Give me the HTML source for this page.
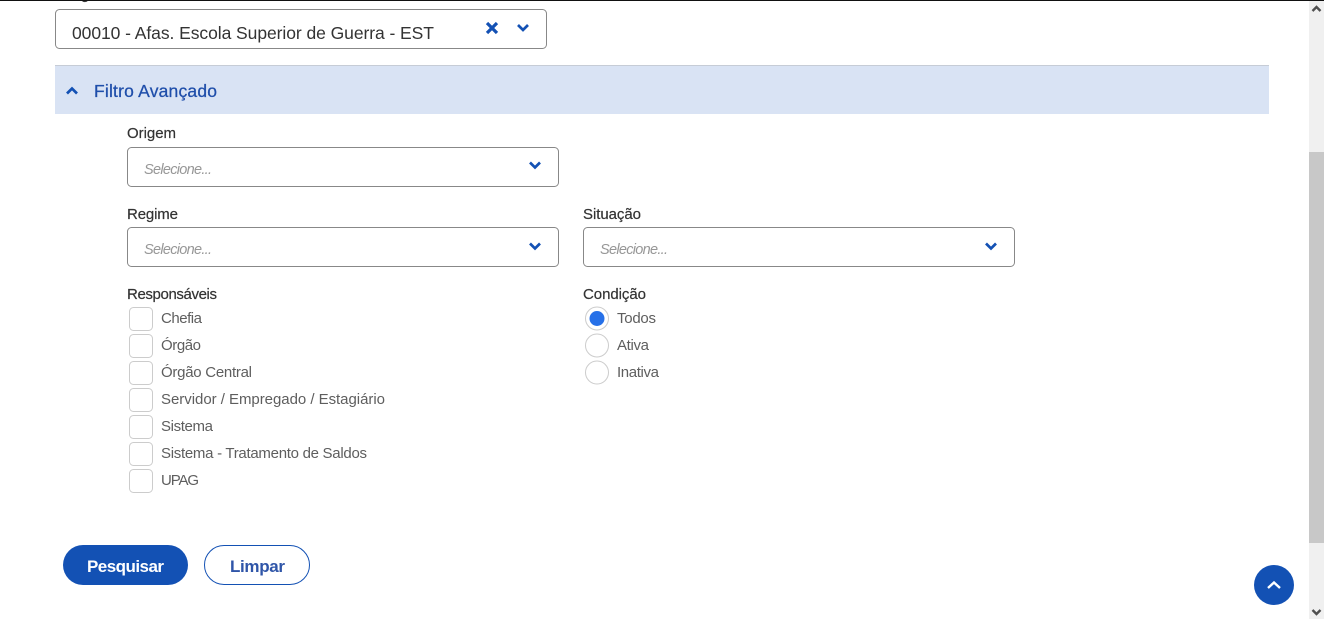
<!DOCTYPE html>
<html lang="pt-BR">
<head>
<meta charset="utf-8">
<title>Filtro Avançado</title>
<style>
html,body{margin:0;padding:0;width:1324px;height:619px;overflow:hidden;background:#fff}
svg{display:block}
text{font-family:"Liberation Sans",sans-serif}
.l{font-size:15px;fill:#333;stroke:#333;stroke-width:.2px}
.o{font-size:15px;fill:#5e5e5e}
.p{font-size:14.5px;fill:#979797;font-style:italic}
.box{fill:#fff;stroke:#888;stroke-width:1}
.ck{fill:#fff;stroke:#ccc;stroke-width:1}
.ch{fill:none;stroke:#1351b4;stroke-width:2.7;stroke-linecap:butt;stroke-linejoin:miter}
</style>
</head>
<body>
<svg width="1324" height="619" viewBox="0 0 1324 619" xmlns="http://www.w3.org/2000/svg">
<rect width="1324" height="619" fill="#fff"/>
<text class="l" x="66" y="-1" textLength="38" lengthAdjust="spacing">Órgão</text>
<rect x="0" y="0" width="1324" height="1" fill="#111"/>

<rect class="box" x="55.500" y="9.500" width="491" height="39" rx="4"/>
<text x="72" y="39" font-size="17.500" fill="#333" textLength="362" lengthAdjust="spacing">00010 - Afas. Escola Superior de Guerra - EST</text>
<path d="M487 23l10 10M497 23l-10 10" fill="none" stroke="#1351b4" stroke-width="3.200"/>
<path class="ch" d="M518 25l5 5 5-5"/>

<rect x="55" y="65" width="1214" height="49" fill="#d9e3f4"/>
<rect x="55" y="65" width="1214" height="1" fill="#c6ccd6"/>
<path class="ch" d="M67 93.500l5-5 5 5"/>
<text x="94" y="97" font-size="17.500" fill="#1f4eaa" stroke="#1f4eaa" stroke-width=".25" textLength="123" lengthAdjust="spacing">Filtro Avançado</text>

<text class="l" x="127" y="138" textLength="49" lengthAdjust="spacing">Origem</text>
<rect class="box" x="127.500" y="147.500" width="431" height="39" rx="4"/>
<text class="p" x="144" y="174" textLength="68" lengthAdjust="spacing">Selecione...</text>
<path class="ch" d="M530 162.500l5 5 5-5"/>

<text class="l" x="127" y="219" textLength="51" lengthAdjust="spacing">Regime</text>
<rect class="box" x="127.500" y="227.500" width="431" height="39" rx="4"/>
<text class="p" x="144" y="254" textLength="68" lengthAdjust="spacing">Selecione...</text>
<path class="ch" d="M530 243.500l5 5 5-5"/>

<text class="l" x="583" y="219" textLength="58" lengthAdjust="spacing">Situação</text>
<rect class="box" x="583.500" y="227.500" width="431" height="39" rx="4"/>
<text class="p" x="600" y="254" textLength="68" lengthAdjust="spacing">Selecione...</text>
<path class="ch" d="M986 243.500l5 5 5-5"/>

<text class="l" x="127" y="299" textLength="90" lengthAdjust="spacing">Responsáveis</text>
<rect class="ck" x="129.500" y="307.500" width="23" height="23" rx="4"/>
<text class="o" x="161" y="323" textLength="41" lengthAdjust="spacing">Chefia</text>
<rect class="ck" x="129.500" y="334.500" width="23" height="23" rx="4"/>
<text class="o" x="161" y="350" textLength="40" lengthAdjust="spacing">Órgão</text>
<rect class="ck" x="129.500" y="361.500" width="23" height="23" rx="4"/>
<text class="o" x="161" y="377" textLength="91" lengthAdjust="spacing">Órgão Central</text>
<rect class="ck" x="129.500" y="388.500" width="23" height="23" rx="4"/>
<text class="o" x="161" y="404" textLength="224" lengthAdjust="spacing">Servidor / Empregado / Estagiário</text>
<rect class="ck" x="129.500" y="415.500" width="23" height="23" rx="4"/>
<text class="o" x="161" y="431" textLength="52" lengthAdjust="spacing">Sistema</text>
<rect class="ck" x="129.500" y="442.500" width="23" height="23" rx="4"/>
<text class="o" x="161" y="458" textLength="206" lengthAdjust="spacing">Sistema - Tratamento de Saldos</text>
<rect class="ck" x="129.500" y="469.500" width="23" height="23" rx="4"/>
<text class="o" x="161" y="485" textLength="38" lengthAdjust="spacing">UPAG</text>

<text class="l" x="583" y="299" textLength="63" lengthAdjust="spacing">Condição</text>
<circle class="ck" cx="597" cy="318.500" r="11.500"/>
<circle cx="597" cy="318.500" r="7.500" fill="#2670e8"/>
<text class="o" x="617" y="323" textLength="39" lengthAdjust="spacing">Todos</text>
<circle class="ck" cx="597" cy="345.500" r="11.500"/>
<text class="o" x="617" y="350" textLength="32" lengthAdjust="spacing">Ativa</text>
<circle class="ck" cx="597" cy="372.500" r="11.500"/>
<text class="o" x="617" y="377" textLength="42" lengthAdjust="spacing">Inativa</text>

<rect x="63" y="545" width="125" height="40" rx="20" fill="#1351b4"/>
<text x="87" y="572" font-size="17" font-weight="700" fill="#fff" textLength="77" lengthAdjust="spacing">Pesquisar</text>
<rect x="204.500" y="545.500" width="105" height="39" rx="19.500" fill="#fff" stroke="#1351b4"/>
<text x="230" y="572" font-size="17" font-weight="700" fill="#2f55a8" textLength="55" lengthAdjust="spacing">Limpar</text>

<circle cx="1274" cy="585" r="20" fill="#1351b4"/>
<path d="M1268 588l6-5.500 6 5.500" fill="none" stroke="#fff" stroke-width="2.400"/>

<rect x="1309" y="0" width="15" height="619" fill="#f0f0f0"/>
<rect x="1309" y="0" width="15" height="1" fill="#111"/>
<rect x="1309" y="152" width="15" height="391" fill="#c8c8c8"/>
<path d="M1312.500 11l4-4 4 4" fill="none" stroke="#505050" stroke-width="2.400"/>
<path d="M1312.500 610l4 4 4-4" fill="none" stroke="#505050" stroke-width="2.400"/>
</svg>
</body>
</html>
